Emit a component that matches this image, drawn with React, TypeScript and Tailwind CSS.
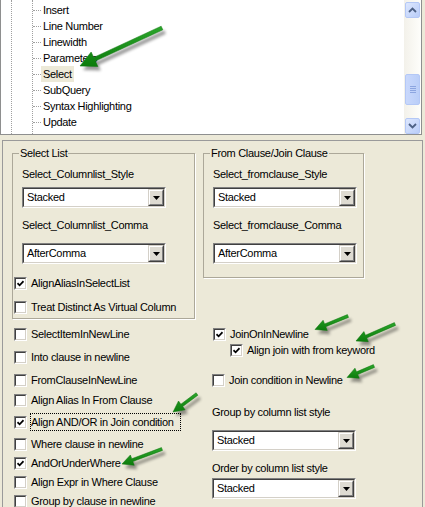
import React from 'react';

const treeItems = ['Insert', 'Line Number', 'Linewidth', 'Parameters', 'Select', 'SubQuery', 'Syntax Highlighting', 'Update', 'Initial Style'];

const leftOptions = [
  { label: 'SelectItemInNewLine', mt: 'mt-[6px]' },
  { label: 'Into clause in newline', mt: 'mt-[5px]' },
  { label: 'FromClauseInNewLine', mt: 'mt-[5px]' },
  { label: 'Align Alias In From Clause', mt: 'mt-[2px]' },
  { label: 'Align AND/OR in Join condition', mt: 'mt-[4px]', on: true, focus: true },
  { label: 'Where clause in newline', mt: 'mt-[4px]' },
  { label: 'AndOrUnderWhere', mt: 'mt-[1px]', on: true },
  { label: 'Align Expr in Where Clause', mt: 'mt-[1px]' },
  { label: 'Group by clause in newline', mt: 'mt-[1px]' },
];

type Arrow = { t: [number, number]; p: [number, number]; s: number; hl: number; hw: number };

const arrows: Arrow[] = [
  { t: [162, 28], p: [80, 66], s: 2, hl: 16, hw: 8 },
  { t: [348, 316], p: [315, 329.5], s: 1.5, hl: 11, hw: 5.5 },
  { t: [395, 324], p: [356, 341], s: 1.5, hl: 11, hw: 5.5 },
  { t: [374, 366], p: [347, 377.5], s: 1.5, hl: 11, hw: 5.5 },
  { t: [197, 394], p: [173, 412], s: 1.5, hl: 11, hw: 5.5 },
  { t: [162, 449], p: [122, 464], s: 1.5, hl: 11, hw: 5.5 },
];

function arrowPoints(a: Arrow) {
  const [tx, ty] = a.t;
  const [px, py] = a.p;
  const dx = px - tx;
  const dy = py - ty;
  const len = Math.hypot(dx, dy);
  const ux = dx / len;
  const uy = dy / len;
  const nx = -uy;
  const ny = ux;
  const bx = px - ux * a.hl;
  const by = py - uy * a.hl;
  const pts = [
    [tx + nx * a.s, ty + ny * a.s],
    [bx + nx * a.s, by + ny * a.s],
    [bx + nx * a.hw, by + ny * a.hw],
    [px, py],
    [bx - nx * a.hw, by - ny * a.hw],
    [bx - nx * a.s, by - ny * a.s],
    [tx - nx * a.s, ty - ny * a.s],
  ];
  return pts.map((p) => p.join(',')).join(' ');
}

function Check({ on }: { on?: boolean }) {
  return (
    <span className="flex h-[13px] w-[13px] shrink-0 border border-t-[#808080] border-l-[#808080] border-b-white border-r-white">
      <span className="flex flex-1 items-center justify-center border border-t-[#404040] border-l-[#404040] border-b-[#D4D0C8] border-r-[#D4D0C8] bg-white">
        {on && (
          <svg width="7" height="7" viewBox="0 0 7 7">
            <path d="M0.5 3.2 L2.6 5.3 L6.5 1.2" stroke="#000" strokeWidth="1.7" fill="none" />
          </svg>
        )}
      </span>
    </span>
  );
}

function Opt({ label, on, focus, className = '' }: { label: string; on?: boolean; focus?: boolean; className?: string }) {
  return (
    <div className={`flex items-center ${className}`}>
      <Check on={on} />
      <span
        className={`ml-[3px] flex h-full items-center whitespace-nowrap border ${
          focus ? 'w-[151px] overflow-hidden border-dotted border-black' : 'border-transparent'
        }`}
      >
        {label}
      </span>
    </div>
  );
}

function Combo({ value }: { value: string }) {
  return (
    <div className="flex h-[21px] w-[144px] border border-t-[#808080] border-l-[#808080] border-b-white border-r-white">
      <div className="flex flex-1 items-center border border-t-[#404040] border-l-[#404040] border-b-[#D4D0C8] border-r-[#D4D0C8] bg-white">
        <span className="flex-1 pl-[3px]">{value}</span>
        <span className="flex h-full w-[16px] border border-t-[#D4D0C8] border-l-[#D4D0C8] border-b-[#404040] border-r-[#404040]">
          <span className="flex flex-1 items-center justify-center border border-t-white border-l-white border-b-[#808080] border-r-[#808080] bg-[#DEDBD2]">
            <svg width="7" height="4" viewBox="0 0 7 4">
              <polygon points="0,0 7,0 3.5,4" fill="#000" />
            </svg>
          </span>
        </span>
      </div>
    </div>
  );
}

function ScrollBtn({ down }: { down?: boolean }) {
  return (
    <div className="flex h-[16px] w-[15px] items-center justify-center rounded-[2px] border border-[#B4C8F6] bg-gradient-to-br from-[#DDE7FE] to-[#B9CDF8]">
      <svg width="9" height="6" viewBox="0 0 9 6">
        <path d={down ? 'M1 1 L4.5 4.5 L8 1' : 'M1 5 L4.5 1.5 L8 5'} stroke="#4D6185" strokeWidth="1.8" fill="none" />
      </svg>
    </div>
  );
}

export default function App() {
  return (
    <div className="relative h-[507px] w-[425px] overflow-hidden bg-[#ECE9D8] font-['Liberation_Sans',Arial,sans-serif] text-[11px] leading-[13px] tracking-[-0.3px] text-black">
      {/* Tree view */}
      <div className="flex h-[135px] w-[422px] border-x border-b border-[#8E8F8F] bg-white">
        <div className="flex flex-1 overflow-hidden">
          <div className="ml-[10px] w-[21px] border-l border-dotted border-[#A0A0A0]" />
          <div className="flex flex-col border-l border-dotted border-[#A0A0A0] pt-[2px]">
            {treeItems.map((it) => (
              <div key={it} className="flex h-[16px] shrink-0 items-center">
                <span className="w-[8px] border-t border-dotted border-[#A0A0A0]" />
                <span className={`flex h-full items-center whitespace-nowrap px-[2px] ${it === 'Select' ? 'bg-[#ECE9D8]' : ''}`}>{it}</span>
              </div>
            ))}
          </div>
        </div>
        <div className="flex w-[17px] flex-col bg-gradient-to-r from-[#F3F1EA] to-[#FEFEFB] px-[1px] pt-[2px]">
          <ScrollBtn />
          <div className="mt-[56px] flex h-[31px] w-[15px] flex-col items-center justify-center gap-[1px] rounded-[2px] border border-[#B4C8F6] bg-gradient-to-r from-[#C9D8FC] to-[#BACEF8]">
            <span className="h-px w-[6px] bg-[#8CA5E0]" />
            <span className="h-px w-[6px] bg-[#8CA5E0]" />
            <span className="h-px w-[6px] bg-[#8CA5E0]" />
            <span className="h-px w-[6px] bg-[#8CA5E0]" />
          </div>
          <div className="mt-auto">
            <ScrollBtn down />
          </div>
        </div>
      </div>

      {/* Options panel */}
      <div className="ml-[2px] mt-[5px] h-[380px] w-[421px] border-x border-t border-[#9A9A9A]">
        <div className="flex items-start pl-[9px] pt-[6px]">
          <fieldset className="h-[172px] w-[183px] border border-[#ACA899] p-0 shadow-[1px_1px_0_#fff]">
            <legend className="ml-[6px] px-[1px] leading-[13px]">Select List</legend>
            <div className="pl-[9px]">
              <div className="mt-[8px]">Select_Columnlist_Style</div>
              <div className="mt-[6px]">
                <Combo value="Stacked" />
              </div>
              <div className="mt-[11px]">Select_Columnlist_Comma</div>
              <div className="mt-[11px]">
                <Combo value="AfterComma" />
              </div>
            </div>
            <Opt className="mt-[11px] h-[16px] pl-[1px]" on label="AlignAliasInSelectList" />
            <Opt className="mt-[8px] h-[16px] pl-[1px]" label="Treat Distinct As Virtual Column" />
          </fieldset>

          <fieldset className="ml-[8px] h-[131px] w-[161px] border border-[#ACA899] p-0 shadow-[1px_1px_0_#fff]">
            <legend className="ml-[6px] px-[1px] leading-[13px]">From Clause/Join Clause</legend>
            <div className="pl-[9px]">
              <div className="mt-[8px]">Select_fromclause_Style</div>
              <div className="mt-[6px]">
                <Combo value="Stacked" />
              </div>
              <div className="mt-[11px]">Select_fromclause_Comma</div>
              <div className="mt-[11px]">
                <Combo value="AfterComma" />
              </div>
            </div>
          </fieldset>
        </div>

        <div className="flex pl-[11px]">
          <div className="flex w-[198px] flex-col">
            {leftOptions.map((o) => (
              <Opt key={o.label} className={`h-[18px] ${o.mt}`} label={o.label} on={o.on} focus={o.focus} />
            ))}
          </div>
          <div className="flex flex-col">
            <Opt className="mt-[7px] h-[16px] pl-[1px]" on label="JoinOnInNewline" />
            <Opt className="h-[16px] pl-[18px]" on label="Align join with from keyword" />
            <Opt className="mt-[14px] h-[16px]" label="Join condition in Newline" />
            <div className="mt-[18px]">Group by column list style</div>
            <div className="mt-[11px]">
              <Combo value="Stacked" />
            </div>
            <div className="mt-[11px]">Order by column list style</div>
            <div className="mt-[3px]">
              <Combo value="Stacked" />
            </div>
          </div>
        </div>
      </div>

      {/* Annotation arrows */}
      <svg className="pointer-events-none absolute inset-0" width="425" height="507">
        <defs>
          <filter id="blur" x="-20%" y="-20%" width="140%" height="140%">
            <feGaussianBlur stdDeviation="1.6" />
          </filter>
          <linearGradient id="green" x1="0" y1="0" x2="0" y2="1">
            <stop offset="0" stopColor="#2BA52B" />
            <stop offset="1" stopColor="#0C7C0C" />
          </linearGradient>
        </defs>
        {arrows.map((a, i) => (
          <g key={i}>
            <polygon points={arrowPoints(a)} fill="#000" opacity="0.4" filter="url(#blur)" transform="translate(3,4)" />
            <polygon points={arrowPoints(a)} fill="url(#green)" stroke="#0B740B" strokeWidth="0.5" />
          </g>
        ))}
      </svg>
    </div>
  );
}
